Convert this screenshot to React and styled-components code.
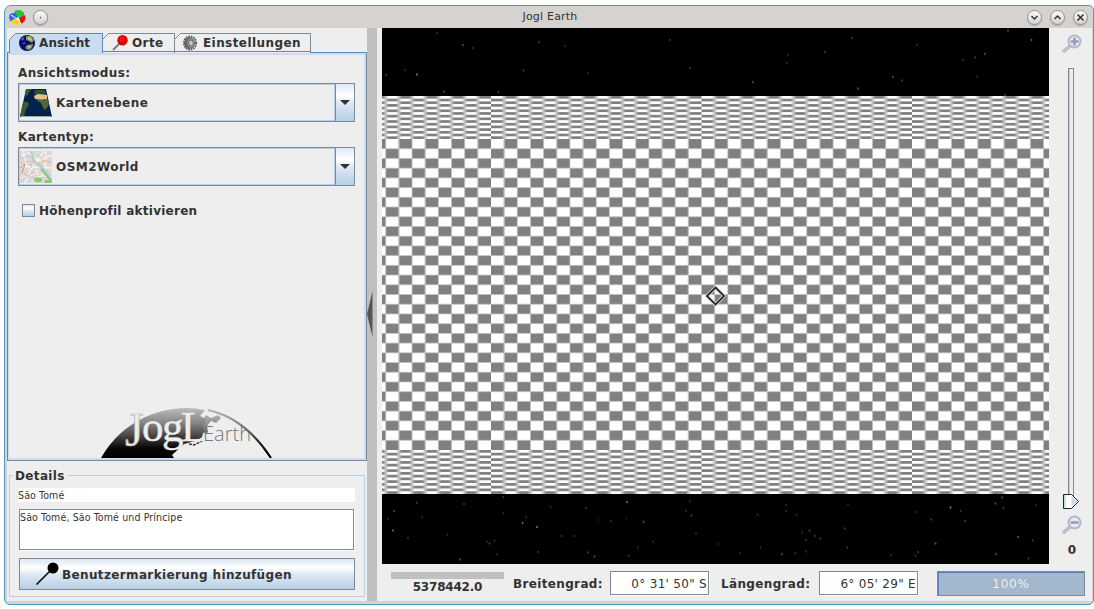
import React from "react";
import styled, { createGlobalStyle, css } from "styled-components";

const Global = createGlobalStyle`
  * { box-sizing: border-box; }
  html, body { margin: 0; padding: 0; background: #fff; overflow: hidden; }
  body { font: bold 12px/16px "DejaVu Sans", "Liberation Sans", sans-serif; letter-spacing: 0.35px; color: #333; }
`;

const Page = styled.div`
  width: 1094px;
  height: 609px;
  padding: 5px 0 4px 4px;
`;
const Window = styled.div`
  width: 1090px;
  height: 600px;
  border: 1px solid #4c9dc6;
  border-radius: 7px 5px 5px 6px;
  background: #d6d2cf;
  padding: 0 1px 3px 2px;
  display: flex;
  flex-direction: column;
`;
const TitleBar = styled.header`
  height: 22px;
  flex: none;
  display: flex;
  align-items: center;
  padding: 0 4px 0 2px;
`;
const Title = styled.h1`
  flex: 1;
  margin: 0 0 0 -2px;
  text-align: center;
  font-size: 11px;
  font-weight: normal;
  line-height: 20px;
  letter-spacing: 0.2px;
  padding-left: 27px;
`;
const RoundButton = styled.span`
  width: 15px;
  height: 15px;
  border-radius: 50%;
  border: 1px solid #949290;
  background: linear-gradient(#fbfbfb, #d4d2d0);
  box-shadow: 0 1px 1px #aaa6a3;
  margin-left: ${(p) => p.$gap || 0}px;
  display: flex;
  svg { width: 13px; height: 13px; display: block; }
`;
const Body = styled.main`
  flex: 1;
  min-height: 0;
  display: flex;
  background: #eee;
`;
const Left = styled.aside`
  width: 360px;
  flex: none;
  display: flex;
  flex-direction: column;
`;
const Tabs = styled.nav`
  height: 24px;
  flex: none;
  padding: 5px 0 0 2px;
  display: flex;
`;
const TabBox = styled.div`
  position: relative;
  width: ${(p) => p.$w}px;
  height: ${(p) => (p.$on ? 20 : 19)}px;
  display: flex;
  align-items: center;
  padding: 0 0 ${(p) => (p.$on ? 1 : 0)}px ${(p) => p.$pad}px;
  gap: ${(p) => p.$gap || 4}px;
  z-index: ${(p) => (p.$on ? 1 : 0)};
  > svg { position: relative; flex: none; }
  > .shape { position: absolute; left: 0; top: 0; }
`;
const TabText = styled.span`
  position: relative;
  letter-spacing: ${(p) => p.$ls}px;
`;
const TabPanel = styled.section`
  height: 409px;
  flex: none;
  border: 1px solid #6382bf;
  border-right-color: #7a8a99;
  border-bottom-color: #7a8a99;
  box-shadow: inset 1px 2px 0 #c8ddf2, inset -2px -2px 0 #c8ddf2;
  padding: 11px 11px 2px 10px;
  display: flex;
  flex-direction: column;
`;
const Label = styled.div`
  height: 16px;
  line-height: 19px;
  white-space: nowrap;
`;
const Combo = styled.div`
  height: 39px;
  width: 337px;
  border: 1px solid #7a8a99;
  display: flex;
  margin: 3px 0 6px;
  letter-spacing: 0.45px;
`;
const ComboValue = styled.div`
  flex: 1;
  display: flex;
  align-items: center;
  border: 1px solid #b8cfe5;
  gap: 4px;
  svg { display: block; }
`;
const metal = css`background: linear-gradient(#dce8f4 0%, #fff 30%, #dde8f3 52%, #b8cfe5 100%);`;
const ComboButton = styled.div`
  width: 19px;
  border-left: 1px solid #7a8a99;
  ${metal}
  display: flex;
  align-items: center;
  justify-content: center;
`;
const CheckRow = styled.label`
  display: flex;
  align-items: center;
  gap: 4px;
  height: 15px;
  margin: 11px 0 0 4px;
  letter-spacing: 0.27px;
`;
const Check = styled.span`
  width: 13px;
  height: 13px;
  border: 1px solid #7a8a99;
  ${metal}
`;
const LogoSlot = styled.div`
  margin: auto 0 0 74px;
  height: 58px;
  svg { display: block; }
`;
const Details = styled.fieldset`
  margin: 6px 2px 0;
  height: 130px;
  border: 1px solid #b8cfe5;
  padding: 5px 9px 0 9px;
  min-width: 0;
  legend { padding: 0 3px 0 2px; margin-left: -6px; height: 16px; line-height: 18px; }
`;
const PlainField = styled.div`
  height: 14px;
  width: 337px;
  margin-left: -1px;
  background: #fff;
  font: 10.5px/14px "DejaVu Sans Condensed", "DejaVu Sans", sans-serif;
  font-stretch: condensed;
  letter-spacing: 0.13px;
`;
const TextArea = styled(PlainField)`
  height: 41px;
  width: 335px;
  margin: 7px 0 8px;
  border: 1px solid #7a8a99;
  box-shadow: 1px 1px 0 #fff;
`;
const MarkerButton = styled.div`
  height: 32px;
  width: 336px;
  border: 1px solid #7a8a99;
  ${metal}
  display: flex;
  align-items: center;
  padding-left: 15px;
  gap: 3px;
  letter-spacing: 0.36px;
  line-height: 18px;
  span { padding-top: 2px; }
`;
const Splitter = styled.div`
  width: 10px;
  flex: none;
  background: #c0c0c0;
  padding-top: 263px;
  svg { display: block; }
`;
const Right = styled.div`
  flex: 1;
  padding-left: 5px;
  display: flex;
  flex-direction: column;
`;
const MapRow = styled.div`
  height: 536px;
  display: flex;
`;
const MapView = styled.div`
  width: 667px;
  height: 536px;
  background: #000;
  svg { display: block; }
`;
const ZoomColumn = styled.div`
  width: 44px;
  display: flex;
  flex-direction: column;
  align-items: center;
  padding-top: 6px;
  svg { display: block; }
`;
const ZoomButton = styled.div`
  height: 20px;
  padding-left: 2px;
  margin: ${(p) => p.$above || 0}px 0 ${(p) => p.$below || 0}px;
`;
const Level = styled.div`
  height: 16px;
  padding-left: 2px;
`;
const StatusBar = styled.footer`
  height: 37px;
  display: flex;
  padding: 7px 0 0 9px;
`;
const Scale = styled.div`
  width: 113px;
  height: 8px;
  padding-top: 7px;
  background: linear-gradient(#c0c0c0, #c0c0c0) 0 1px / 113px 7px no-repeat;
  text-align: center;
  line-height: 18px;
  letter-spacing: -0.2px;
`;
const StatusLabel = styled.div`
  width: ${(p) => p.$w}px;
  margin-left: 9px;
  line-height: 26px;
  white-space: nowrap;
`;
const CoordField = styled.div`
  width: 99px;
  height: 24px;
  border: 1px solid #7a8a99;
  box-shadow: 1px 1px 0 #fff;
  background: #fff;
  font-weight: normal;
  line-height: 24px;
  letter-spacing: 0.3px;
  text-align: right;
  padding-right: 1px;
  margin-right: 3px;
  white-space: pre;
`;
const Progress = styled.div`
  width: 148px;
  height: 25px;
  margin-left: 16px;
  background: #a3b8cc;
  border: 1px solid #7a8a99;
  box-shadow: inset 1px 1px 0 #6382bf;
  color: #eee;
  font-weight: normal;
  line-height: 24px;
  letter-spacing: 0.8px;
  text-align: center;
`;

function Tab({ w, on, pad, gap, ls, icon, children }) {
  return (
    <TabBox $w={w} $on={on} $pad={pad} $gap={gap}>
      <svg className="shape" width={w + 1} height="20">
        <path
          d={`M.5 20V6.5L6.5 .5H${w + 0.5}V20`}
          fill={on ? "#c8ddf2" : "#eee"}
          stroke={on ? "#6382bf" : "#7a8a99"}
        />
        {!on && <path d={`M0 18.5H${w + 1}`} stroke="#6382bf" />}
      </svg>
      {icon}
      <TabText $ls={ls}>{children}</TabText>
    </TabBox>
  );
}

const AppIcon = () => (
  <svg width="17" height="17" viewBox="0 0 17 17">
    <circle cx="8" cy="9" r="7" fill="#e8eef8" />
    <path d="M1 5 7 3 9 8 2 13Q-1 9 1 5" fill="#2c6bd6" />
    <path d="M5 2Q12-1 15 4V8L10 9Z" fill="#27c43a" />
    <path d="M10 9 16 6Q18 12 12 15Z" fill="#e01414" />
    <path d="M2 12Q7 7 12 15 6 18 2 13" fill="#ffcf1a" />
    <path d="M2 6 8 10M9 10 12 15" stroke="#fff" />
  </svg>
);
const Globe = () => (
  <svg width="16" height="16" viewBox="0 0 16 16">
    <circle cx="8" cy="8" r="8" fill="#090f68" />
    <path d="M7 1 12 1 15 5 13 8 10 6 7 5ZM8 10 14 9Q14 14 9 15L6 13Z" fill="#8a9658" />
    <path d="M9 2 13 4 12 6 9 4ZM9 11 12 11 10 14Z" fill="#d3cda6" />
    <path d="M2 4 5 2 5 4 3 6ZM3 9 6 7 6 9Z" fill="#5272c6" />
  </svg>
);
const RedPin = () => (
  <svg width="16" height="16" viewBox="0 0 16 16">
    <path d="M1 15 9 7" stroke="#777" strokeWidth="1.8" />
    <circle cx="10.5" cy="5.2" r="5.2" fill="#d60000" />
    <circle cx="10" cy="4" r="2.8" fill="#f01616" />
  </svg>
);
const Gear = () => (
  <svg width="16" height="16" viewBox="0 0 16 16">
    <ellipse cx="8" cy="8" rx="6" ry="6.6" fill="none" stroke="#555" strokeWidth="2" strokeDasharray="1.6 .9" />
    <ellipse cx="7.5" cy="8" rx="5.4" ry="6" fill="#666" />
    <ellipse cx="9" cy="8" rx="4" ry="4.8" fill="#8d8d8d" />
    <ellipse cx="9" cy="8" rx="2.4" ry="3" fill="#c8c8c8" stroke="#555" strokeWidth=".8" />
  </svg>
);
const EarthPlane = () => (
  <svg width="32" height="32" viewBox="0 0 32 32">
    <path d="M6 2H26L32 30H0Z" fill="#04224a" />
    <path d="M6 2H12L9 5 8 8 5 9ZM3 15 8 15 9 18 6 22 4 29H0Z" fill="#3d5a34" />
    <path d="M15 3H25L27 12 22 12 20 9 14 7Z" fill="#35502c" />
    <path d="M14 9 18 7 27 8 27 12 22 13 15 12Z" fill="#e6c28d" />
    <path d="M16 13 28 12 29 17 27 21 24 23 21 16Z" fill="#526734" />
    <path d="M0 30 1 29H31L32 30Z" fill="#9aa9a8" />
  </svg>
);
const StreetMap = () => (
  <svg width="32" height="32" viewBox="0 0 32 32">
    <rect width="32" height="32" fill="#ded9d7" />
    <path d="M0 5 9 2 18 10 32 4M3 0 6 14 17 20 20 32M0 15 12 16 32 17M5 32 11 18 24 0M0 27 14 24 32 26M26 0 25 20 13 31" fill="none" stroke="#f5f2ee" strokeWidth="1.5" />
    <path d="M0 5 4 8 7 4 14 8 10 15 15 19 9 25 3 22M18 4 22 9 31 11M19 12 29 22M1 30 7 25 16 28 25 26" fill="none" stroke="#b9b5bb" strokeWidth="1" strokeDasharray="2 1" />
    <path d="M0 12 8 10 15 13 23 10 32 13M4 17 0 24M12 25 22 24" fill="none" stroke="#edc99d" />
    <path d="M0 17 5 13 2 22" fill="none" stroke="#df8686" />
    <path d="M11 0 14 10 24 19 32 29" fill="none" stroke="#a9cfcb" strokeWidth="2" />
    <path d="M21 18 32 31" stroke="#8cc48c" strokeWidth="2" />
    <ellipse cx="18" cy="29" rx="4" ry="2.5" fill="#85cc66" />
    <path d="M25 29H31V32H24Z" fill="#8ccc70" />
  </svg>
);
const BlackPin = () => (
  <svg width="24" height="24" viewBox="0 0 24 24">
    <path d="M1.5 22.5 15 9" stroke="#111" strokeWidth="1.7" />
    <circle cx="18" cy="6" r="5.5" fill="#000" />
  </svg>
);
const Arrow = () => (
  <svg width="10" height="5"><path d="M0 0H10L5 5Z" fill="#333" /></svg>
);
const Logo = () => (
  <svg width="180" height="58" viewBox="92 400 180 58">
    <defs>
      <linearGradient id="dome" x1="0" y1="408" x2="0" y2="458" gradientUnits="userSpaceOnUse">
        <stop offset="0" stopColor="#bcbcbc" />
        <stop offset=".3" stopColor="#858585" />
        <stop offset=".8" stopColor="#080808" />
        <stop offset="1" stopColor="#000" />
      </linearGradient>
    </defs>
    <path d="M101 458A97.3 97.3 0 0 1 205 410L200 416 206 419 203 427 206 434 195 441 184 444 172 455 174 458Z" fill="url(#dome)" />
    <path d="M198 415 204 418 206 415 211 418 218 415 221 418 216 423 211 421 207 426 208 432 201 438 196 441 199 434 203 430 201 424 197 420Z" fill="url(#dome)" opacity=".85" />
    <path d="M208 410Q245 418 271 458" fill="none" stroke="url(#dome)" strokeWidth="2.2" />
    <path d="M172 438 177 434 181 438 185 434 189 438M189 444 194 445 204 440" fill="none" stroke="#333" strokeWidth="1.5" strokeDasharray="3 1" />
    <text y="441" fontFamily="Liberation Serif, serif" fontWeight="normal" fontSize="43" letterSpacing="0" fill="#eee">
      <tspan x="125" y="446" fontSize="48" stroke="#b0b0b0" strokeWidth=".7">J</tspan>
      <tspan x="142" y="441" stroke="#eee" strokeWidth=".4">o</tspan>
      <tspan x="162" y="441" stroke="#eee" strokeWidth=".4">g</tspan>
      <tspan x="181" y="441" stroke="#eee" strokeWidth=".4">L</tspan>
    </text>
    <text x="203" y="441" fontFamily="Open Sans, sans-serif" fontSize="21" fontWeight="300" letterSpacing="0" fill="#777" textLength="48" lengthAdjust="spacingAndGlyphs">Earth</text>
  </svg>
);
const Magnifier = ({ plus }) => (
  <svg width="22" height="20" viewBox="0 0 22 20">
    <path d="M2 18 9.5 11.5" stroke="#a9adba" strokeWidth="3" />
    <path d="M2 18 9.5 11.5" stroke="#dddfe9" strokeWidth="1" />
    <circle cx="13.5" cy="7.5" r="6" fill="#e8e9f4" stroke="#b4b7c4" strokeWidth="2" />
    <path d={plus ? "M9.5 7.5H17.5M13.5 3.5V11.5" : "M9.5 7.5H17.5"} stroke="#989cba" strokeWidth="2.6" />
  </svg>
);
const SliderTrack = () => (
  <svg width="16" height="446" viewBox="0 0 16 446">
    <rect x="5.5" y="4.5" width="5" height="436" fill="#eee" stroke="#7a8a99" />
    <path d="M6.5 5V440" stroke="#b8cfe5" />
    <path d="M.5 430.5H8.5L15.5 437.5 8.5 444.5H.5Z" fill="#fff" stroke="#222" />
    <path d="M2 431V444" stroke="#c8ddf2" strokeWidth="2" />
    <path d="M8.5 432 14 437.5 8.5 443Z" fill="#c8ddf2" />
  </svg>
);

const stars = [
  [394, 511, 5], [388, 519, 3], [393, 530.5, 7], [417, 503, 4], [422, 517, 3], [408, 538, 4], [464, 504, 4], [447.5, 534.5, 3],
  [460, 559.5, 5], [487, 541.5, 3], [489.5, 543.5, 4], [494.5, 540.5, 3], [497, 554.5, 3], [503.5, 497, 4], [503.5, 513, 3],
  [522.5, 523, 7], [526, 517.5, 3], [537, 527, 8], [538, 552, 4], [550.5, 507, 3], [561.5, 536, 4], [574.5, 536, 3],
  [588, 552.5, 4], [594.5, 556.5, 5], [586, 508, 3], [598, 520, 2], [611, 521, 3], [626.5, 518.5, 2], [627, 502, 7],
  [643.5, 522, 5], [653, 541.5, 3], [638, 547.5, 3], [628.5, 555.5, 3], [690, 501, 3], [691.5, 515.5, 4], [686, 511, 3],
  [696, 533.5, 3], [718.5, 544, 2], [740, 553, 3], [757.5, 514.5, 3], [760.5, 547.5, 3], [786, 505, 3], [786, 511, 3],
  [796.5, 515, 3], [802, 532.5, 3], [809.5, 530.5, 4], [815, 536, 4], [820.5, 538.5, 4], [806, 540, 3], [782, 554, 5],
  [795.5, 553, 3], [806, 551.5, 3], [844.5, 528.5, 4], [847.5, 547.5, 4], [848, 504.5, 3], [891, 555, 3], [916, 512, 3],
  [950.5, 507.5, 8], [960.5, 511, 4], [931.5, 519.5, 4], [965, 521, 4], [935.5, 543.5, 6], [918, 552, 4], [915.5, 555.5, 3],
  [996, 554, 5], [1018, 537, 6], [1032.5, 540.5, 4], [1028.5, 558.5, 4], [1002, 497.5, 5], [995.5, 503.5, 5], [1003.5, 508, 4],
  [1036, 505, 3], [417, 74.5, 8], [386, 75, 4], [405, 70, 3], [444, 91.5, 5], [498.5, 92, 4], [523.5, 70.5, 4], [588, 73, 3],
  [463, 45, 5], [473, 48, 4], [437, 33, 3], [539, 42, 4], [565, 46, 3], [670, 40, 4], [690, 68, 4], [753, 82, 5],
  [858, 88.5, 6], [788, 55, 3], [787, 63, 3], [825, 52, 4], [852, 38, 4], [893, 77, 5], [902, 80.5, 4], [917, 45, 3],
  [963, 60, 3], [1008, 30.5, 5], [1031.5, 40, 6], [975, 57.5, 4], [985, 54, 5], [977, 76.5, 3], [1005, 95, 4],
];
const CELL = 631.5 / 48;
const edges = Array.from({ length: 60 }, (_, i) => i).filter((i) => i % 16 !== 0);

function Band({ id, y, h, rows }) {
  const r = h / rows;
  return (
    <g>
      <pattern id={id} x="280.5" y={y} width={CELL * 2} height={r * 2} patternUnits="userSpaceOnUse">
        <rect width={CELL * 2} height={r * 2} fill="#fff" />
        <rect x={CELL} width={CELL} height={r} fill="#808080" />
        <rect y={r} width={CELL} height={r} fill="#808080" />
      </pattern>
      <rect x="382" y={y} width="667" height={h} fill={`url(#${id})`} />
    </g>
  );
}
const MapDrawing = () => (
  <svg width="667" height="536" viewBox="382 28 667 536">
    <defs>
      <linearGradient id="soft">
        <stop offset="0" stopColor="#c0c0c0" stopOpacity="0" />
        <stop offset=".5" stopColor="#c0c0c0" />
        <stop offset="1" stopColor="#c0c0c0" stopOpacity="0" />
      </linearGradient>
    </defs>
    {stars.map(([x, y, v], i) => (
      <ellipse key={i} cx={x} cy={y} rx=".9" ry="1.2" fill="#999" opacity={v / 11} />
    ))}
    <Band id="north" y={96} h={43} rows={16} />
    <Band id="middle" y={139} h={311} rows={32} />
    <Band id="south" y={450} h={44} rows={16} />
    {edges.map((i) => (
      <g key={i}>
        <rect x={280.5 + i * CELL - 3} y="96" width="6" height="43" fill="url(#soft)" />
        <rect x={280.5 + i * CELL - 3} y="450" width="6" height="44" fill="url(#soft)" />
        <rect x={280.5 + i * CELL - 0.5} y="139" width="1" height="311" fill="#c0c0c0" opacity=".75" />
      </g>
    ))}
    {Array.from({ length: 31 }, (_, i) => (
      <rect key={i} x="382" y={139 + ((i + 1) * 311) / 32 - 0.5} width="667" height="1" fill="#c0c0c0" opacity=".75" />
    ))}
    <path d="M715.5 287.5 724 296 715.5 304.5 707 296Z" fill="none" stroke="#ccc" strokeWidth="3.4" />
    <path d="M715.5 287.5 724 296 715.5 304.5 707 296Z" fill="none" stroke="#111" strokeWidth="1.5" />
  </svg>
);

export default function App() {
  return (
    <Page>
      <Global />
      <Window>
        <TitleBar>
          <AppIcon />
          <RoundButton $gap={7}>
            <svg viewBox="0 0 13 13"><circle cx="6.5" cy="6.5" r=".7" fill="#444" /></svg>
          </RoundButton>
          <Title>Jogl Earth</Title>
          <RoundButton><svg viewBox="0 0 13 13"><path d="M3.5 5 6.5 8 9.5 5" fill="none" stroke="#333" strokeWidth="1.5" /></svg></RoundButton>
          <RoundButton $gap={8}><svg viewBox="0 0 13 13"><path d="M3.5 8 6.5 5 9.5 8" fill="none" stroke="#333" strokeWidth="1.5" /></svg></RoundButton>
          <RoundButton $gap={8}><svg viewBox="0 0 13 13"><path d="M3.5 3.5 9.5 9.5M9.5 3.5 3.5 9.5" stroke="#333" strokeWidth="1.6" /></svg></RoundButton>
        </TitleBar>
        <Body>
          <Left>
            <Tabs>
              <Tab w={93} on pad={10} ls={0.1} icon={<Globe />}>Ansicht</Tab>
              <Tab w={72} pad={10} ls={0.4} icon={<RedPin />}>Orte</Tab>
              <Tab w={136} pad={8} gap={5} ls={0.42} icon={<Gear />}>Einstellungen</Tab>
            </Tabs>
            <TabPanel>
              <Label>Ansichtsmodus:</Label>
              <Combo>
                <ComboValue><EarthPlane />Kartenebene</ComboValue>
                <ComboButton><Arrow /></ComboButton>
              </Combo>
              <Label>Kartentyp:</Label>
              <Combo>
                <ComboValue><StreetMap />OSM2World</ComboValue>
                <ComboButton><Arrow /></ComboButton>
              </Combo>
              <CheckRow><Check />Höhenprofil aktivieren</CheckRow>
              <LogoSlot><Logo /></LogoSlot>
            </TabPanel>
            <Details>
              <legend>Details</legend>
              <PlainField>São Tomé</PlainField>
              <TextArea>São Tomé, São Tomé und Príncipe</TextArea>
              <MarkerButton><BlackPin /><span>Benutzermarkierung hinzufügen</span></MarkerButton>
            </Details>
          </Left>
          <Splitter>
            <svg width="6" height="46"><path d="M5.5 0V46L0 23Z" fill="#555" /></svg>
          </Splitter>
          <Right>
            <MapRow>
              <MapView><MapDrawing /></MapView>
              <ZoomColumn>
                <ZoomButton $below={10}><Magnifier plus /></ZoomButton>
                <SliderTrack />
                <ZoomButton $above={5} $below={7}><Magnifier /></ZoomButton>
                <Level>0</Level>
              </ZoomColumn>
            </MapRow>
            <StatusBar>
              <Scale>5378442.0</Scale>
              <StatusLabel $w={97}>Breitengrad:</StatusLabel>
              <CoordField>{"0° 31' 50\" S"}</CoordField>
              <StatusLabel $w={98}>Längengrad:</StatusLabel>
              <CoordField>{"6° 05' 29\" E"}</CoordField>
              <Progress>100%</Progress>
            </StatusBar>
          </Right>
        </Body>
      </Window>
    </Page>
  );
}
